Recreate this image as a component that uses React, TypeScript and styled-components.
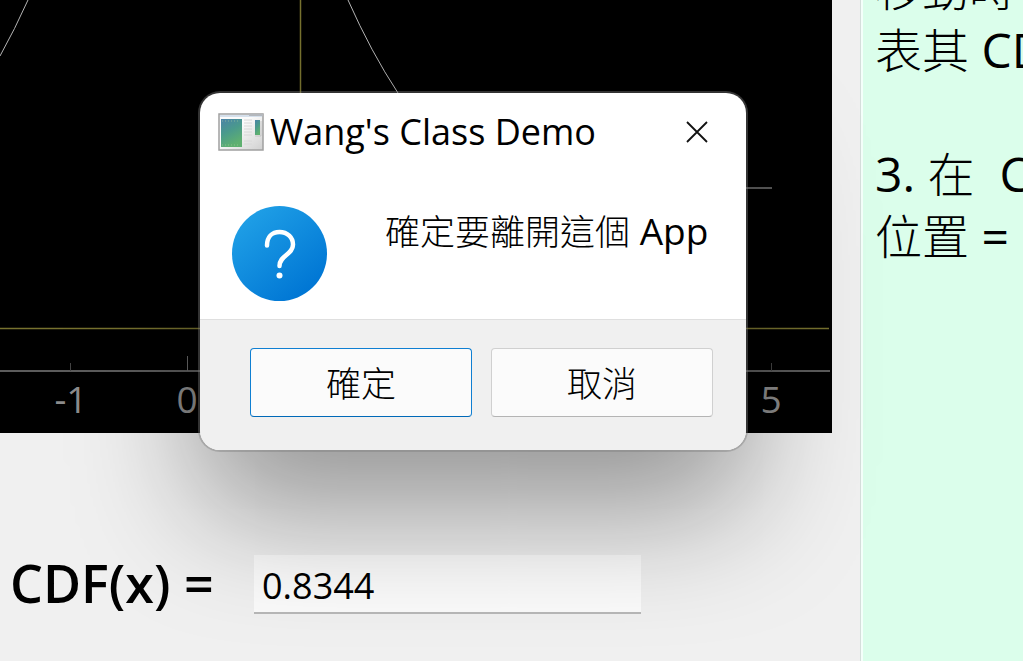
import React from "react";
import styled, { createGlobalStyle, css } from "styled-components";

const GlobalStyle = createGlobalStyle`
  *, *::before, *::after { box-sizing: border-box; }
  body {
    margin: 0;
    background: #f0f0f0;
    color: #000;
    font-family: "Open Sans", "Noto Sans CJK TC", sans-serif;
  }
`;

const cjkText = css`
  font-family: "Noto Sans CJK TC", sans-serif;
  font-weight: 300;
`;

const Window = styled.div`
  position: relative;
  display: flex;
  min-height: 100vh;
  overflow: hidden;
`;

const Workspace = styled.main`
  flex: 1;
  min-width: 0;
`;

const Chart = styled.svg`
  display: block;
  width: calc(100% - 28px);
  height: auto;
  background: #000;
`;

const AxisLabel = styled.text`
  fill: #8c8c8c;
  font-size: 37px;
  text-anchor: middle;
`;

const ResultRow = styled.div`
  display: flex;
  align-items: center;
  padding: 122px 20px 47px 10px;
`;

const ResultLabel = styled.label`
  flex: 0 0 244px;
  padding-bottom: 4px;
  font-size: 52px;
  line-height: 54px;
  font-weight: 600;
  white-space: nowrap;
`;

const ResultInput = styled.input`
  flex: 0 1 387px;
  min-width: 0;
  height: 59px;
  padding: 4px 8px 0;
  border: 0;
  border-bottom: 2px solid #b8b8b8;
  background: #fbfbfb;
  color: #000;
  font: 400 36px/48px "Open Sans", sans-serif;
  outline: none;
`;

const Notes = styled.aside`
  flex: 0 0 163px;
  overflow: hidden;
  border-left: 1px solid #d5dedb;
  background: #dbfeeb;
  box-shadow: inset 2px 0 #f4fffa;
`;

const NotesText = styled.div`
  margin-top: -43px;
  padding-left: 14px;
  font-size: 48px;
  line-height: 62px;
  white-space: pre;
`;

const NotesLine = styled.p`
  height: 62px;
  margin: 0;
`;

const Cjk = styled.span<{ $size: number }>`
  ${cjkText}
  font-size: ${(p) => p.$size}px;
  line-height: 1;
`;

const Dialog = styled.section`
  position: absolute;
  left: 200px;
  top: 93px;
  width: 546px;
  overflow: hidden;
  border-radius: 20px;
  background: #fff;
  box-shadow: 0 0 0 2px rgba(124, 124, 124, 0.41),
    0 60px 124px rgba(0, 0, 0, 0.38);
`;

const TitleBar = styled.header`
  display: flex;
  align-items: center;
  height: 77px;
  padding: 0 18px;
`;

const Title = styled.h1`
  flex: 1;
  margin: 0 0 0 6px;
  font-size: 36px;
  line-height: 48px;
  font-weight: 400;
  white-space: nowrap;
`;

const CloseButton = styled.button`
  display: grid;
  place-items: center;
  width: 62px;
  height: 60px;
  padding: 0;
  border: 0;
  background: none;
`;

const Message = styled.div`
  display: flex;
  align-items: flex-start;
  height: 149px;
  padding: 36px 32px 0;
`;

const Question = styled.p`
  margin: 0 0 0 58px;
  font-size: 37px;
  line-height: 50px;
  white-space: nowrap;
`;

const Actions = styled.footer`
  display: flex;
  justify-content: flex-end;
  gap: 19px;
  padding: 28px 33px 33px;
  border-top: 1px solid #dfdfdf;
  background: #f0f0f0;
`;

const ActionButton = styled.button<{ $primary?: boolean }>`
  ${cjkText}
  width: 222px;
  height: 69px;
  padding: 0 0 2px;
  border: 1px solid ${(p) => (p.$primary ? "#0f7fd2" : "#d0d0d0")};
  border-bottom-color: ${(p) => (p.$primary ? "#0069b8" : "#b4b4b4")};
  border-radius: 4px;
  background: #fbfbfb;
  color: #000;
  font-size: 35px;
  line-height: 48px;
`;

const AppIcon = () => (
  <svg width="46" height="38" viewBox="0 0 46 38" aria-hidden="true">
    <defs>
      <linearGradient id="pane" x1="0" y1="0" x2="0.4" y2="1">
        <stop offset="0" stopColor="#4b82a8" />
        <stop offset="0.5" stopColor="#4a9a8c" />
        <stop offset="1" stopColor="#5fb070" />
      </linearGradient>
      <linearGradient id="frame" x1="0" y1="0" x2="1" y2="1">
        <stop offset="0.4" stopColor="#fbfbfb" />
        <stop offset="1" stopColor="#cfcfcf" />
      </linearGradient>
    </defs>
    <rect x="1" y="1" width="44" height="36" fill="url(#frame)" stroke="#a0a0a0" strokeWidth="1.500" />
    <rect x="2" y="2" width="42" height="2" fill="#d5e0ec" />
    <rect x="31" y="1" width="14" height="2" fill="#b4b8bd" />
    <rect x="3" y="6" width="21" height="28" fill="url(#pane)" />
    <path d="M4 8h18M4 32h18" stroke="#a9cf9c" strokeDasharray="1 2" opacity="0.6" />
    <path d="M26 7h8M26 10h8M26 13h8M26 16h8M26 19h8M26 22h8M26 28h8M26 31h8" stroke="#d8d8d8" />
    <rect x="37" y="7" width="5" height="15" fill="url(#pane)" />
    <path d="M37 23h6V8" fill="none" stroke="#bbb" opacity="0.7" />
  </svg>
);

const QuestionIcon = () => (
  <svg width="95" height="95" viewBox="0 0 95 95" aria-hidden="true">
    <defs>
      <linearGradient id="disc" x1="0.15" y1="0.1" x2="0.8" y2="0.9">
        <stop offset="0" stopColor="#1f9fe6" />
        <stop offset="1" stopColor="#0076d4" />
      </linearGradient>
    </defs>
    <circle cx="47.5" cy="47.5" r="47.5" fill="url(#disc)" />
    <path
      d="M35 39.500C35 31 40 26 47.500 26C55.500 26 61 31.500 61 38.500C61 49 47.500 49 47.500 60"
      fill="none"
      stroke="#fff"
      strokeWidth="4.500"
      strokeLinecap="round"
    />
    <circle cx="47.5" cy="69.500" r="3" fill="#fff" />
  </svg>
);

export default function App() {
  return (
    <>
      <GlobalStyle />
      <Window>
        <Workspace>
          <Chart viewBox="0 0 832 433" role="img" aria-label="Distribution chart">
            <g fill="none" stroke="#b4b4b4">
              <path d="M28 0Q15 29 0 56" />
              <path d="M348 0Q371 52 398 93" />
              <path d="M700 188H772" />
            </g>
            <path d="M300.500 0V328M0 328.500H829" fill="none" stroke="#77722f" strokeWidth="1.500" />
            <path d="M0 371H830" stroke="#5c5c5c" strokeWidth="2" />
            <path d="M187.500 356V371" stroke="#686868" />
            <path d="M70.500 363V371M771.500 363V371" stroke="#444" />
            <AxisLabel x="71" y="413">-1</AxisLabel>
            <AxisLabel x="187" y="413">0</AxisLabel>
            <AxisLabel x="771" y="413">5</AxisLabel>
          </Chart>
          <ResultRow>
            <ResultLabel htmlFor="cdf">CDF(x) =</ResultLabel>
            <ResultInput id="cdf" defaultValue="0.8344" />
          </ResultRow>
        </Workspace>

        <Notes>
          <NotesText>
            <NotesLine><Cjk $size={47}>移動時</Cjk></NotesLine>
            <NotesLine><Cjk $size={47}>表其</Cjk> CDF</NotesLine>
            <NotesLine />
            <NotesLine>3. <Cjk $size={47}>在</Cjk>{"  "}CDF</NotesLine>
            <NotesLine><Cjk $size={47}>位置</Cjk> =</NotesLine>
          </NotesText>
        </Notes>

        <Dialog role="dialog" aria-modal="true" aria-labelledby="dialog-title">
          <TitleBar>
            <AppIcon />
            <Title id="dialog-title">Wang's Class Demo</Title>
            <CloseButton aria-label="Close">
              <svg width="22" height="22" viewBox="0 0 22 22" aria-hidden="true">
                <path d="M1 1L21 21M21 1L1 21" stroke="#111" strokeWidth="1.800" />
              </svg>
            </CloseButton>
          </TitleBar>
          <Message>
            <QuestionIcon />
            <Question><Cjk $size={35}>確定要離開這個</Cjk> App</Question>
          </Message>
          <Actions>
            <ActionButton $primary>確定</ActionButton>
            <ActionButton>取消</ActionButton>
          </Actions>
        </Dialog>
      </Window>
    </>
  );
}
